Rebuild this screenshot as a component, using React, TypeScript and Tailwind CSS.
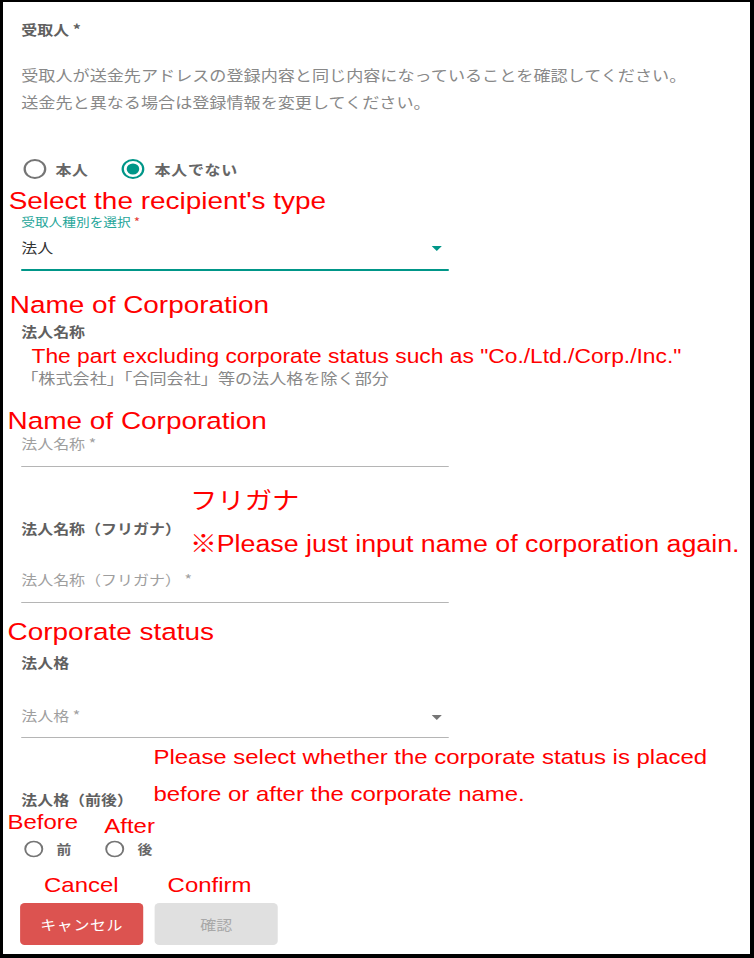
import React from 'react'
import clsx from 'clsx'

// red annotation text laid over the form
const Note = ({ children, className }: { children: React.ReactNode; className?: string }) => (
  <div
    className={clsx(
      "font-['Liberation_Sans','Noto_Sans_CJK_JP',sans-serif] text-[#ff0000] whitespace-nowrap",
      className
    )}
  >
    {children}
  </div>
)

const Radio = ({ checked, className }: { checked?: boolean; className?: string }) => (
  <svg viewBox="0 0 24 24" className={clsx('shrink-0', className)}>
    <circle cx="12" cy="12" r="9" fill="none" stroke={checked ? '#009688' : '#757575'} strokeWidth="2" />
    {checked && <circle cx="12" cy="12" r="5.5" fill="#009688" />}
  </svg>
)

const Arrow = ({ color, className }: { color: string; className?: string }) => (
  <svg width="9" height="5" viewBox="0 0 9 5" className={className}>
    <polygon points="0,0 9,0 4.5,5" fill={color} />
  </svg>
)

const SectionLabel = ({ children, className }: { children: React.ReactNode; className?: string }) => (
  <div className={clsx('text-[14px] leading-[20px] font-bold text-[#606060]', className)}>{children}</div>
)

const TextField = ({ placeholder, className }: { placeholder: string; className?: string }) => (
  <div
    className={clsx(
      'w-[375px] text-[14px] leading-[20px] text-[#9e9e9e] pb-[13px] border-b border-[#b5b5b5]',
      className
    )}
  >
    {placeholder}
  </div>
)

export default function App() {
  return (
    <div className="w-[754px] h-[958px] bg-white border-black border-t-2 border-l-[3px] border-r-4 border-b-4 overflow-hidden">
      <div className="w-[655px] origin-top-left scale-x-[1.14] pl-[16px] pt-[17px] font-['Noto_Sans_CJK_JP',sans-serif]">
        <SectionLabel>受取人 *</SectionLabel>
        <p className="mt-[22px] text-[15px] leading-[27px] text-[#888]">
          受取人が送金先アドレスの登録内容と同じ内容になっていることを確認してください。
          <br />
          送金先と異なる場合は登録情報を変更してください。
        </p>

        {/* 本人 / 本人でない */}
        <div className="mt-[42px] h-[24px] flex items-center">
          <Radio className="w-6 h-6" />
          <span className="ml-[6px] text-[14px] font-bold text-[#666] tracking-[0.5px]">本人</span>
          <Radio checked className="w-6 h-6 ml-[27px]" />
          <span className="ml-[7px] text-[14px] font-bold text-[#666] tracking-[0.6px]">本人でない</span>
        </div>

        <Note className="mt-[8px] -ml-[11px] text-[24.5px] leading-[24px]">Select the recipient's type</Note>

        <div className="mt-[2px] text-[12px] leading-[14px] text-[#26a69a]">
          受取人種別を選択 <span className="text-[#e53935]">*</span>
        </div>
        <div className="mt-[6px] w-[375px] flex justify-between items-start pb-[10px] border-b-2 border-[#009688]">
          <span className="text-[14px] leading-[24px] text-[#333]">法人</span>
          <Arrow color="#009688" className="mt-[11px] mr-[6px]" />
        </div>

        <Note className="mt-[22px] -ml-[10px] text-[24.5px] leading-[24px]">Name of Corporation</Note>
        <SectionLabel className="mt-[4px]">法人名称</SectionLabel>
        <Note className="mt-[5px] ml-[9px] text-[20px] leading-[20px]">
          The part excluding corporate status such as "Co./Ltd./Corp./Inc."
        </Note>
        <p className="mt-[2px] text-[15px] leading-[20px] text-[#888]">「株式会社」「合同会社」等の法人格を除く部分</p>

        <Note className="mt-[21px] -ml-[12px] text-[24.5px] leading-[24px]">Name of Corporation</Note>
        <TextField placeholder="法人名称 *" />

        {/* フリガナ */}
        <div className="relative mt-[51px]">
          <SectionLabel>法人名称（フリガナ）</SectionLabel>
          <Note className="absolute left-[148px] top-[-29px] text-[24px] leading-[24px]">フリガナ</Note>
          <Note className="absolute left-[148px] top-[14px] text-[23.5px] leading-[24px]">
            ※Please just input name of corporation again.
          </Note>
        </div>
        <TextField placeholder="法人名称（フリガナ） *" className="mt-[31px]" />

        <Note className="mt-[17px] -ml-[12px] text-[24.5px] leading-[24px]">Corporate status</Note>
        <SectionLabel className="mt-[8px]">法人格</SectionLabel>
        <div className="mt-[33px] w-[375px] flex justify-between items-start pb-[12px] border-b border-[#b5b5b5]">
          <span className="text-[14px] leading-[20px] text-[#9e9e9e]">法人格 *</span>
          <Arrow color="#757575" className="mt-[10px] mr-[6px]" />
        </div>

        {/* 前後 */}
        <div className="relative mt-[51px]">
          <SectionLabel>法人格（前後）</SectionLabel>
          <Note className="absolute left-[116px] top-[-51px] text-[21px] leading-[37px]">
            Please select whether the corporate status is placed
            <br />
            before or after the corporate name.
          </Note>
        </div>
        <div className="mt-[2px] h-[28px] flex items-start">
          <Note className="-ml-[12px] text-[21px] leading-[21px]">Before</Note>
          <Note className="ml-[23px] mt-[4px] text-[21px] leading-[21px]">After</Note>
        </div>
        <div className="h-[20px] flex items-center">
          <Radio className="w-5 h-5 ml-[1px]" />
          <span className="ml-[10px] text-[13px] font-bold text-[#666]">前</span>
          <Radio className="w-5 h-5 ml-[28px]" />
          <span className="ml-[10px] text-[13px] font-bold text-[#666]">後</span>
        </div>

        <div className="mt-[15px] flex">
          <Note className="ml-[20px] text-[21px] leading-[21px]">Cancel</Note>
          <Note className="ml-[43px] text-[21px] leading-[21px]">Confirm</Note>
        </div>
        <div className="mt-[8px] -ml-[1px] flex gap-[10px]">
          <button className="w-[108px] h-[42px] rounded-[4px] bg-[#dc5350] text-white text-[14px] tracking-[0.5px]">キャンセル</button>
          <button className="w-[108px] h-[42px] rounded-[4px] bg-[#e0e0e0] text-[#a8a8a8] text-[14px]">確認</button>
        </div>
      </div>
    </div>
  )
}
